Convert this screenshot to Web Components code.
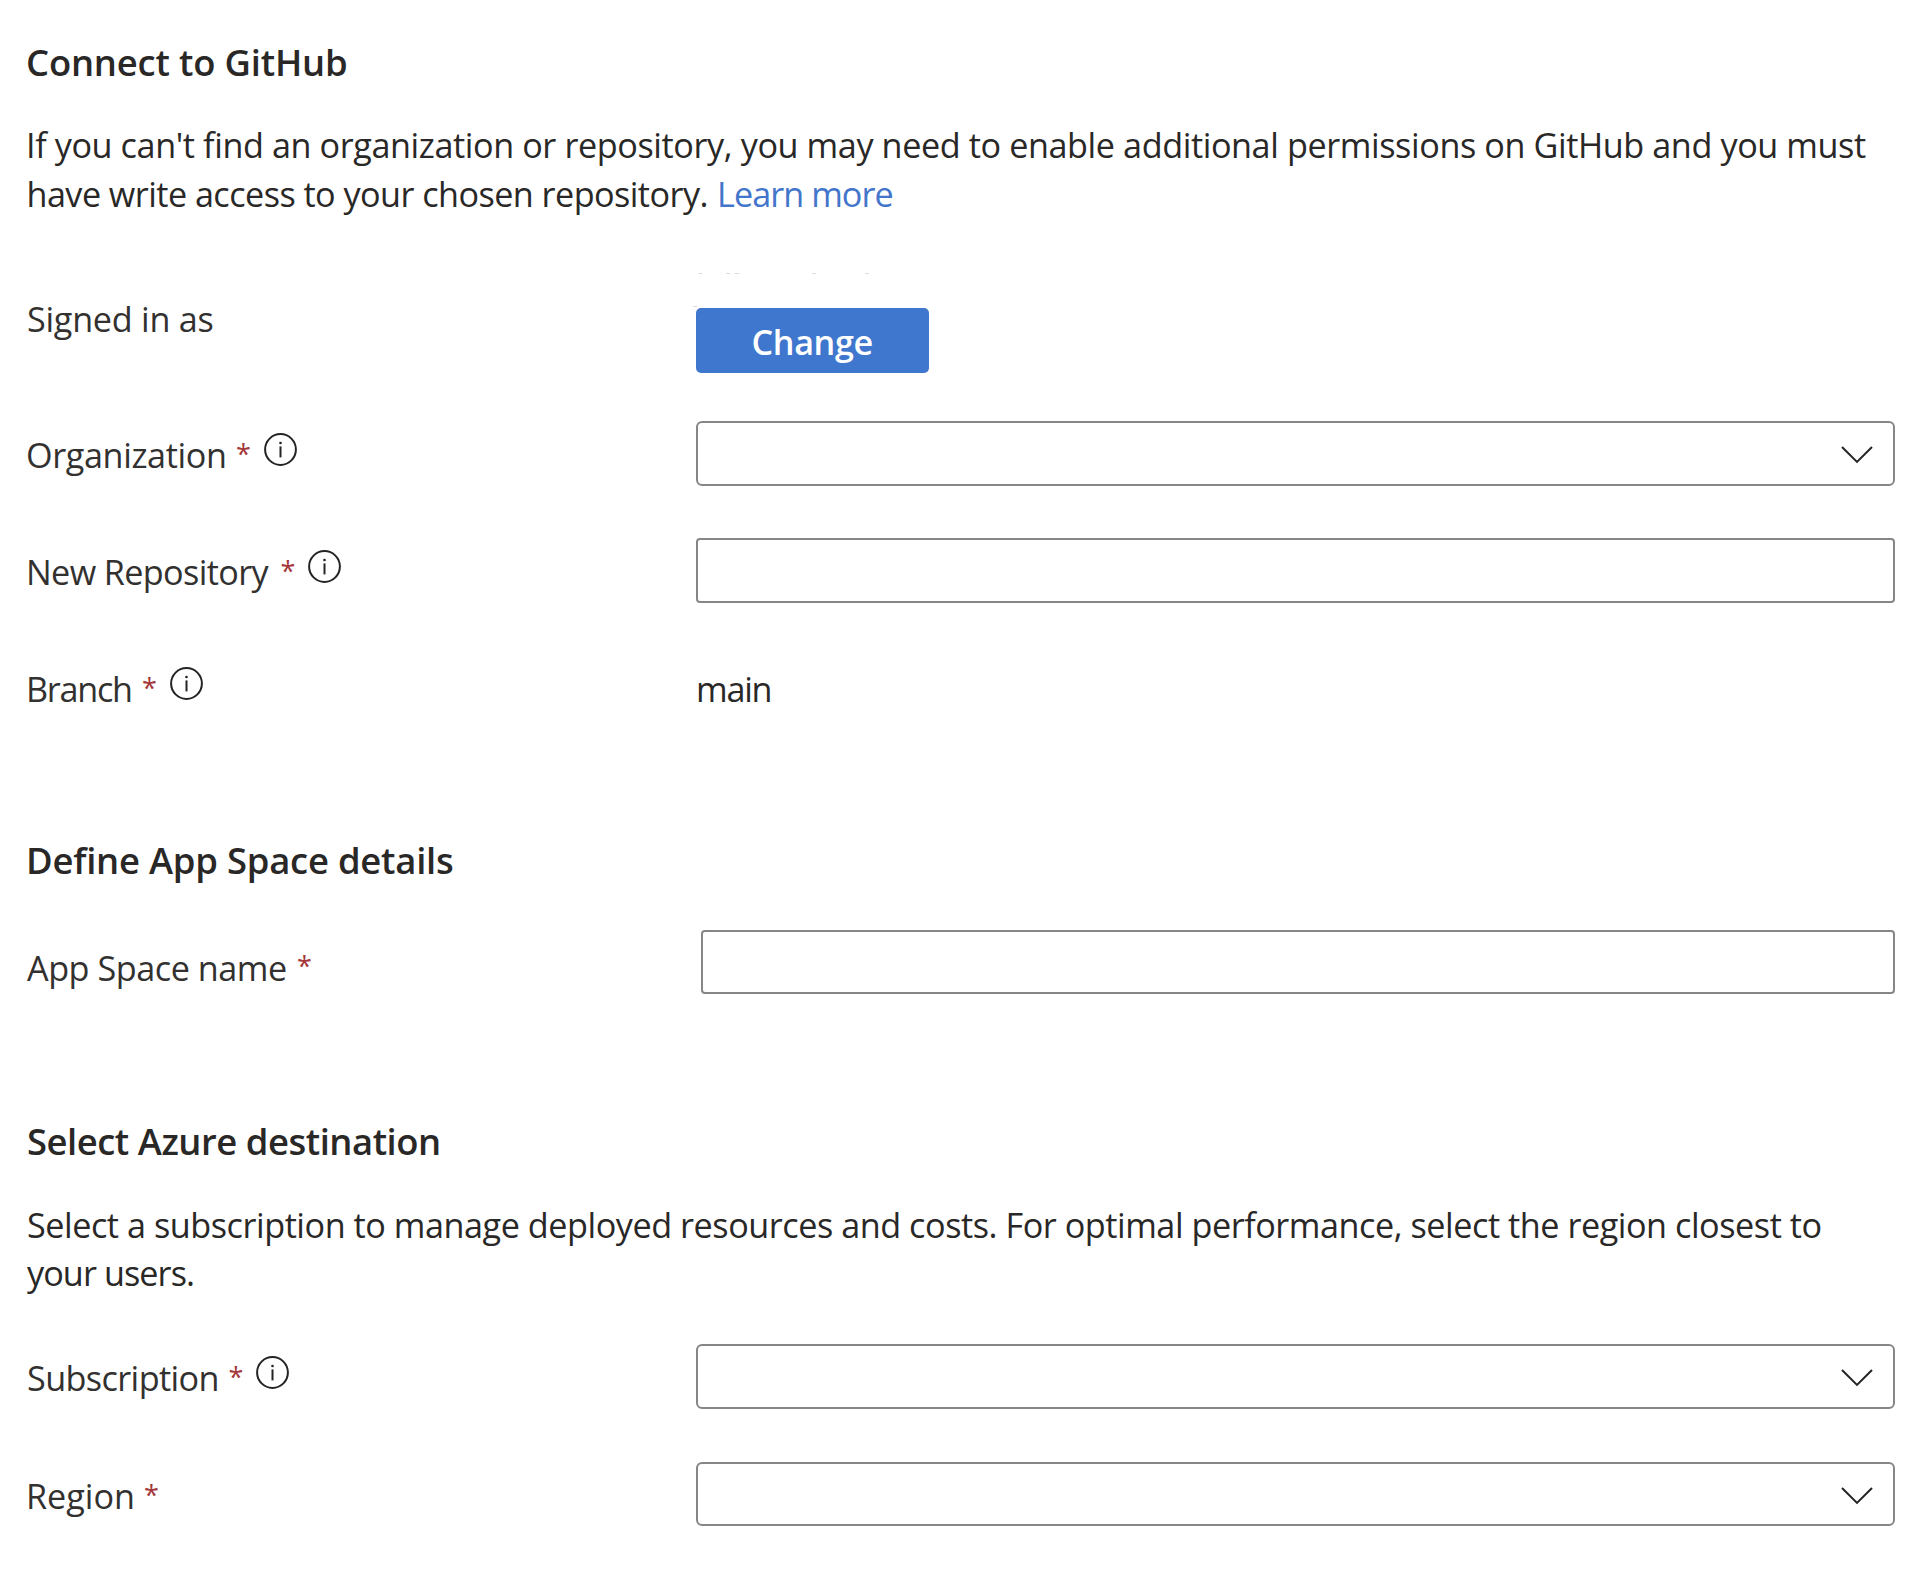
<!DOCTYPE html>
<html lang="en">
<head>
<meta charset="utf-8">
<title>Create App Space</title>
<style>
  html, body { margin: 0; background: #fff; }
  body { width: 1920px; height: 1569px; overflow: hidden; font-family: "Open Sans", "Noto Sans", sans-serif; color: #292827; }
</style>
</head>
<body>
<app-space-form></app-space-form>
<script>
const define = (name, html, init) => {
  const template = document.createElement('template');
  template.innerHTML = html;
  customElements.define(name, class extends HTMLElement {
    connectedCallback() {
      if (this.shadowRoot) return;
      this.attachShadow({ mode: 'open' }).append(template.content.cloneNode(true));
      if (init) init(this, this.shadowRoot);
    }
  });
};

/* One line of text, tracked so that its ink spans the width in "ink"; "lead" shifts its start. */
const ctx = document.createElement('canvas').getContext('2d');
define('text-line', `
  <style>
    :host { display: block; font-variant-ligatures: none; flex: none; }
    span { display: block; white-space: pre; }
  </style>
  <span><slot></slot></span>`, (host, root) => {
  const cs = getComputedStyle(host);
  const text = host.textContent;
  ctx.font = `${cs.fontWeight} ${cs.fontSize} ${cs.fontFamily}`;
  const m = ctx.measureText(text);
  const ink = m.actualBoundingBoxRight + m.actualBoundingBoxLeft;
  const lead = +(host.getAttribute('lead') || 0);
  const target = +host.getAttribute('ink');
  host.style.width = target + 'px';
  const span = root.querySelector('span');
  span.style.marginLeft = (m.actualBoundingBoxLeft + lead) + 'px';
  if (text.length > 1) span.style.letterSpacing = ((target - lead - ink) / (text.length - 1)).toFixed(4) + 'px';
});

define('section-title', `
  <style>:host { display: block; height: 50px; line-height: 50px; font-size: 36.4px; font-weight: 600; }</style>
  <slot></slot>`);

define('section-text', `
  <style>
    :host { display: flex; flex-direction: column; font-size: 34.2px; line-height: var(--leading, 49px); }
  </style>
  <slot></slot>`);

define('text-row', `
  <style>:host { display: flex; gap: 12px; }</style><slot></slot>`);

define('info-icon', `
  <style>:host { display: block; width: 33px; height: 33px; } svg { display: block; }</style>
  <svg width="33" height="33" viewBox="0 0 33 33">
    <circle cx="16.5" cy="16.5" r="15.4" fill="none" stroke="#252423" stroke-width="2"/>
    <rect x="15.5" y="13.4" width="2" height="11" fill="#252423"/>
    <circle cx="16.5" cy="10" r="1.35" fill="#252423"/>
  </svg>`);

define('form-row', `
  <style>
    :host { display: grid; grid-template-columns: 668px 1fr; height: 65px; }
    .label { display: flex; align-items: flex-start; font-size: 34.2px; line-height: 48px; color: #323130; }
    .text { padding-top: var(--label-top, 9.5px); }
    .star { display: none; margin-left: 12px; padding-top: var(--star-top, 8.5px); color: #a4373a; font-size: 27px; }
    info-icon { display: none; margin: 12px 0 0 14.5px; }
    :host([required]) .star, :host([info]) info-icon { display: block; }
  </style>
  <div class="label">
    <div class="text"><slot name="label"></slot></div>
    <div class="star"><text-line ink="12">*</text-line></div>
    <info-icon></info-icon>
  </div>
  <div><slot></slot></div>`);

define('text-box', `
  <style>
    :host { display: block; box-sizing: border-box; height: var(--box-height, 65px); border: 2px solid #868686; border-radius: 4px; background: #fff; }
  </style>`);

define('select-box', `
  <style>
    :host { display: flex; justify-content: flex-end; box-sizing: border-box; height: var(--box-height, 65px); border: 2px solid #868686; border-radius: 6px; background: #fff; }
    svg { display: block; margin: var(--chevron-top, 23px) 20px 0 0; }
  </style>
  <svg width="32" height="19" viewBox="0 0 32 19"><path d="M1 1 L16 15.9 L31 1" fill="none" stroke="#252423" stroke-width="2"/></svg>`);

define('primary-button', `
  <style>
    :host { display: flex; justify-content: center; box-sizing: border-box; width: 233px; height: 65px; padding-top: 10px; border-radius: 5px; background: #4077ce; color: #fff; font-size: 34.2px; line-height: 48px; font-weight: 600; }
  </style>
  <slot></slot>`);

/* Sliver of the account name that stays visible above the button. */
define('account-trace', `
  <style>:host { display: block; height: 35px; margin-left: -4px; } svg { display: block; }</style>
  <svg width="240" height="35" fill="#dcdcdc">
    <rect x="7" y="0" width="3" height="1"/><rect x="34" y="0" width="4" height="1"/><rect x="43" y="0" width="4" height="1"/>
    <rect x="120" y="0" width="4" height="1"/><rect x="173" y="0" width="4" height="1"/><rect x="1" y="33" width="4" height="1"/>
  </svg>`);

define('app-space-form', `
  <style>
    :host { display: flex; flex-direction: column; box-sizing: border-box; width: 1920px; height: 1569px; padding: 37px 25px 0 28px; background: #fff; }
    .s1 { margin-top: 33px; }
    .account { margin-top: 55px; height: 100px; --label-top: 21.5px; }
    .org { margin-top: 48px; }
    .repo { margin-top: 52px; }
    .branch { margin-top: 52px; }
    .main { padding: 9.5px 0 0 2px; font-size: 34.2px; line-height: 48px; }
    .define { margin-top: 115px; }
    .name { margin-top: 45px; height: 64px; --label-top: 13.5px; --star-top: 12px; --box-height: 64px; }
    .name text-box { margin-left: 5px; }
    .azure { margin-top: 122px; }
    .s2 { margin-top: 35px; --leading: 48px; }
    .sub { margin-top: 47px; }
    .region { margin-top: 53px; height: 64px; --box-height: 64px; }
    .link { color: #4375cb; }
  </style>
  <section-title><text-line ink="318">Connect to GitHub</text-line></section-title>
  <section-text class="s1">
    <text-line lead="1" ink="1838">If you can't find an organization or repository, you may need to enable additional permissions on GitHub and you must</text-line>
    <text-row><text-line lead="0.5" ink="678.5">have write access to your chosen repository.</text-line><text-line class="link" lead="1.5" ink="174">Learn more</text-line></text-row>
  </section-text>
  <form-row class="account">
    <text-line slot="label" ink="184.5">Signed in as</text-line>
    <account-trace></account-trace>
    <primary-button><text-line lead="1" ink="120">Change</text-line></primary-button>
  </form-row>
  <form-row class="org" required info><text-line slot="label" ink="197">Organization</text-line><select-box></select-box></form-row>
  <form-row class="repo" required info><text-line slot="label" lead="1" ink="241.5">New Repository</text-line><text-box></text-box></form-row>
  <form-row class="branch" required info><text-line slot="label" lead="1" ink="103">Branch</text-line><div class="main"><text-line ink="72.5">main</text-line></div></form-row>
  <section-title class="define"><text-line lead="1" ink="425">Define App Space details</text-line></section-title>
  <form-row class="name" required><text-line slot="label" lead="-1" ink="258">App Space name</text-line><text-box></text-box></form-row>
  <section-title class="azure"><text-line ink="411">Select Azure destination</text-line></section-title>
  <section-text class="s2">
    <text-line ink="1792.5">Select a subscription to manage deployed resources and costs. For optimal performance, select the region closest to</text-line>
    <text-line lead="-1" ink="165">your users.</text-line>
  </section-text>
  <form-row class="sub" required info><text-line slot="label" ink="189.5">Subscription</text-line><select-box></select-box></form-row>
  <form-row class="region" required><text-line slot="label" lead="1" ink="105">Region</text-line><select-box></select-box></form-row>`);
</script>
</body>
</html>
